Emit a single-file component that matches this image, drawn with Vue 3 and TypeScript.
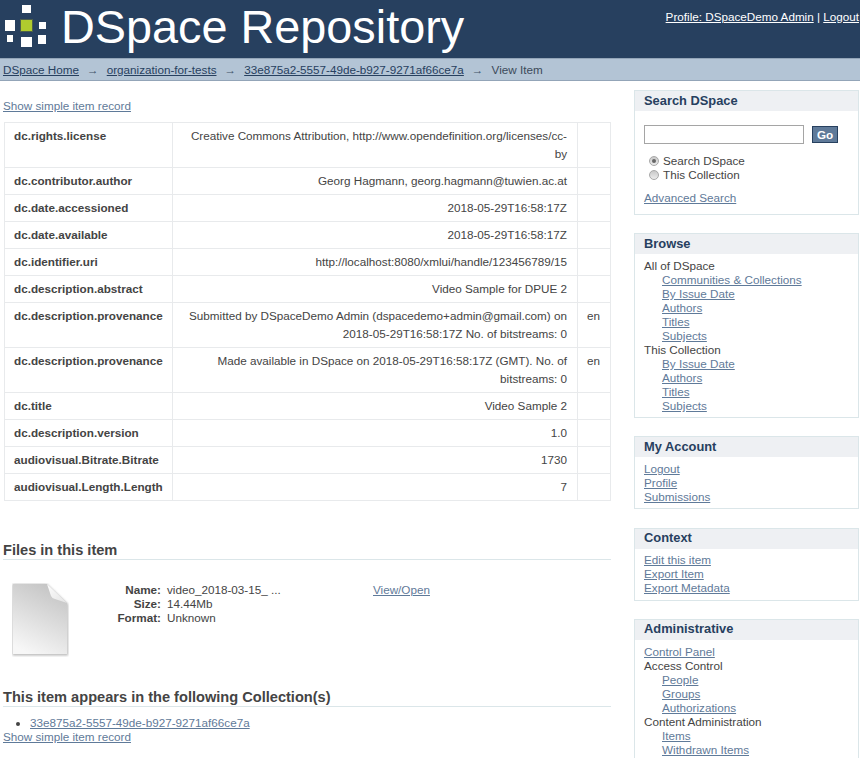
<template>
  <div class="page">
    <header class="top">
      <div class="brand">
        <svg class="logo" width="50" height="50" viewBox="0 0 50 50" aria-hidden="true">
          <rect x="22" y="5" width="9" height="8" fill="#fff" />
          <rect x="5" y="20" width="10" height="11" fill="#fff" />
          <rect x="20" y="19" width="13" height="13" fill="#4d5f4a" />
          <rect x="21" y="20" width="11" height="11" fill="#b0cb2e" />
          <rect x="39" y="22" width="7" height="7" fill="#fff" />
          <rect x="7" y="35" width="6" height="7" fill="#fff" />
          <rect x="21" y="37" width="11" height="10" fill="#fff" />
          <rect x="38" y="35" width="8" height="9" fill="#fff" />
        </svg>
        <h1>DSpace Repository</h1>
      </div>
      <div class="user">
        <a href="#">Profile: DSpaceDemo Admin</a> | <a href="#">Logout</a>
      </div>
    </header>

    <nav class="trail">
      <template v-for="crumb in crumbs" :key="crumb">
        <a href="#">{{ crumb }}</a>
        <span class="arrow">→</span>
      </template>
      <span class="current">View Item</span>
    </nav>

    <div class="columns">
      <main class="body">
        <p class="toggle"><a href="#">Show simple item record</a></p>
        <table class="meta">
          <tbody>
            <tr v-for="(row, i) in metadata" :key="i">
              <th>{{ row.field }}</th>
              <td class="value">{{ row.value }}</td>
              <td class="lang">{{ row.lang }}</td>
            </tr>
          </tbody>
        </table>

        <h2 class="files-title">Files in this item</h2>
        <div class="file">
          <svg class="file-icon" width="57" height="74" viewBox="0 0 57 74" aria-hidden="true">
            <defs>
              <linearGradient id="sheet" x1="0.7" y1="0" x2="0.3" y2="1">
                <stop offset="0" stop-color="#c4c4c4" />
                <stop offset="1" stop-color="#f7f7f7" />
              </linearGradient>
              <linearGradient id="fold" x1="0" y1="0" x2="1" y2="1">
                <stop offset="0" stop-color="#fdfdfd" />
                <stop offset="1" stop-color="#e4e4e4" />
              </linearGradient>
              <filter id="soft" x="-10%" y="-10%" width="120%" height="120%">
                <feGaussianBlur stdDeviation="0.8" />
              </filter>
            </defs>
            <path d="M0.5 1H35L56 21V72.5H0.5Z" fill="#8c8c8c" opacity="0.6" filter="url(#soft)" />
            <path d="M1 1H35L55 20V71H1Z" fill="url(#sheet)" />
            <path d="M35 1L55 20L43 16Q40 15.5 39 13Z" fill="url(#fold)" />
          </svg>
          <dl class="file-info">
            <div><dt>Name:</dt><dd>video_2018-03-15_ ...</dd></div>
            <div><dt>Size:</dt><dd>14.44Mb</dd></div>
            <div><dt>Format:</dt><dd>Unknown</dd></div>
          </dl>
          <a class="view" href="#">View/Open</a>
        </div>

        <h2 class="coll-title">This item appears in the following Collection(s)</h2>
        <ul class="coll-list">
          <li><a href="#">33e875a2-5557-49de-b927-9271af66ce7a</a></li>
        </ul>
        <p class="toggle-end"><a href="#">Show simple item record</a></p>
      </main>

      <aside class="side">
        <section class="box">
          <h3>Search DSpace</h3>
          <div class="search">
            <div class="search-row">
              <input type="text" class="q" />
              <button type="button" class="go">Go</button>
            </div>
            <label class="radio"><input type="radio" name="scope" checked />Search DSpace</label>
            <label class="radio"><input type="radio" name="scope" />This Collection</label>
            <a class="adv" href="#">Advanced Search</a>
          </div>
        </section>

        <section v-for="box in boxes" :key="box.title" class="box">
          <h3>{{ box.title }}</h3>
          <div class="links">
            <template v-for="line in box.lines" :key="line.label">
              <div v-if="line.kind === 'head'">{{ line.label }}</div>
              <div v-else :class="{ sub: line.kind === 'sub' }"><a href="#">{{ line.label }}</a></div>
            </template>
          </div>
        </section>
      </aside>
    </div>
  </div>
</template>

<script setup lang="ts">
interface MetaRow {
  field: string;
  value: string;
  lang?: string;
}

interface BoxLine {
  label: string;
  kind: 'head' | 'link' | 'sub';
}

const crumbs = ['DSpace Home', 'organization-for-tests', '33e875a2-5557-49de-b927-9271af66ce7a'];

const metadata: MetaRow[] = [
  { field: 'dc.rights.license', value: 'Creative Commons Attribution, http://www.opendefinition.org/licenses/cc-by' },
  { field: 'dc.contributor.author', value: 'Georg Hagmann, georg.hagmann@tuwien.ac.at' },
  { field: 'dc.date.accessioned', value: '2018-05-29T16:58:17Z' },
  { field: 'dc.date.available', value: '2018-05-29T16:58:17Z' },
  { field: 'dc.identifier.uri', value: 'http://localhost:8080/xmlui/handle/123456789/15' },
  { field: 'dc.description.abstract', value: 'Video Sample for DPUE 2' },
  {
    field: 'dc.description.provenance',
    value: 'Submitted by DSpaceDemo Admin (dspacedemo+admin@gmail.com) on 2018-05-29T16:58:17Z No. of bitstreams: 0',
    lang: 'en'
  },
  {
    field: 'dc.description.provenance',
    value: 'Made available in DSpace on 2018-05-29T16:58:17Z (GMT). No. of bitstreams: 0',
    lang: 'en'
  },
  { field: 'dc.title', value: 'Video Sample 2' },
  { field: 'dc.description.version', value: '1.0' },
  { field: 'audiovisual.Bitrate.Bitrate', value: '1730' },
  { field: 'audiovisual.Length.Length', value: '7' }
];

const sub = (label: string): BoxLine => ({ label, kind: 'sub' });
const link = (label: string): BoxLine => ({ label, kind: 'link' });
const head = (label: string): BoxLine => ({ label, kind: 'head' });

const boxes: { title: string; lines: BoxLine[] }[] = [
  {
    title: 'Browse',
    lines: [
      head('All of DSpace'),
      sub('Communities & Collections'),
      sub('By Issue Date'),
      sub('Authors'),
      sub('Titles'),
      sub('Subjects'),
      head('This Collection'),
      sub('By Issue Date '),
      sub('Authors '),
      sub('Titles '),
      sub('Subjects ')
    ]
  },
  { title: 'My Account', lines: [link('Logout'), link('Profile'), link('Submissions')] },
  { title: 'Context', lines: [link('Edit this item'), link('Export Item'), link('Export Metadata')] },
  {
    title: 'Administrative',
    lines: [
      link('Control Panel'),
      head('Access Control'),
      sub('People'),
      sub('Groups'),
      sub('Authorizations'),
      head('Content Administration'),
      sub('Items'),
      sub('Withdrawn Items')
    ]
  }
];
</script>

<style>
html,
body {
  margin: 0;
  overflow: hidden;
  background: #fff;
}
</style>

<style scoped>
.page {
  height: 758px;
  overflow: hidden;
  font-family: "Liberation Sans", Arial, sans-serif;
  font-size: 11.7px;
  line-height: 14px;
  color: #444;
}

a {
  color: #5f7a99;
}

.top {
  display: flex;
  justify-content: space-between;
  height: 58px;
  background: #27405f;
  color: #fff;
}

.brand {
  display: flex;
}

.logo {
  flex: none;
  margin-right: 11px;
}

h1 {
  margin: 0;
  font-size: 46.8px;
  font-weight: 400;
  line-height: 54px;
  color: #fff;
}

.user {
  padding: 10px 1px 0 0;
}

.user a {
  color: #fff;
}

.trail {
  display: flex;
  align-items: center;
  height: 21px;
  padding-left: 3px;
  background: #b3c4d5;
  border-top: 1px solid #93a5b8;
  border-bottom: 1px solid #93a5b8;
  color: #27405f;
}

.trail a {
  color: #27405f;
}

.arrow {
  margin: 0 8px;
  color: #3c4f66;
}

.current {
  color: #3c4a5a;
}

.columns {
  display: flex;
  align-items: flex-start;
}

.body {
  flex: none;
  width: 608px;
  margin-left: 3px;
}

.toggle {
  margin: 18px 0 9px;
}

.meta {
  width: 607px;
  margin-left: 1px;
  border-collapse: collapse;
  table-layout: fixed;
  line-height: 18px;
}

.meta th,
.meta td {
  padding: 4px 9px;
  border: 1px solid #e8eaec;
  vertical-align: top;
}

.meta th {
  width: 149px;
  text-align: left;
  font-weight: 700;
  color: #444;
}

.meta .value {
  padding-right: 10px;
  text-align: right;
}

.meta .lang {
  width: 14px;
}

h2 {
  margin: 0;
  font-size: 14.6px;
  line-height: 18px;
  font-weight: 700;
  color: #444;
  border-bottom: 1px solid #dbe6e9;
}

.files-title {
  margin-top: 40px;
}

.file {
  display: flex;
  align-items: flex-start;
  height: 128px;
  padding-top: 23px;
  box-sizing: border-box;
}

.file-icon {
  flex: none;
  margin-left: 9px;
}

.file-info {
  flex: none;
  width: 304px;
  margin: 0;
}

.file-info div {
  display: flex;
}

.file-info dt {
  width: 92px;
  text-align: right;
  font-weight: 700;
}

.file-info dd {
  margin: 0 0 0 6px;
}

.coll-list {
  margin: 9px 0 0;
  padding-left: 27px;
}

.toggle-end {
  margin: 0;
}

.side {
  flex: none;
  width: 225px;
  margin: 9px 0 0 23px;
}

.box {
  margin-bottom: 18px;
  border: 1px solid #dbe6e9;
}

.box:nth-child(3) {
  margin-bottom: 19px;
}

.box h3 {
  margin: 0;
  padding: 2px 9px 3px;
  font-size: 12.87px;
  line-height: 15px;
  font-weight: 700;
  background: #eef0f3;
  color: #27405f;
}

.box:nth-child(n + 4) h3 {
  padding: 1px 9px 4px;
}

.search {
  display: flex;
  flex-direction: column;
  padding: 14px 9px 9px;
}

.search-row {
  display: flex;
  align-items: center;
  margin-bottom: 10px;
}

.q {
  width: 160px;
  height: 19px;
  box-sizing: border-box;
  margin: 0;
  padding: 0;
  border: 1px solid #a5a5a5;
  background: #fff;
}

.go {
  width: 26px;
  height: 17px;
  margin-left: 8px;
  padding: 0;
  border: 1px solid #27405f;
  border-radius: 0;
  background: #5f7a99;
  color: #fff;
  font: 700 11.7px "Liberation Sans", Arial, sans-serif;
}

.radio {
  display: flex;
  align-items: center;
  padding-left: 4px;
}

.radio input {
  appearance: none;
  display: grid;
  place-items: center;
  box-sizing: border-box;
  width: 10px;
  height: 10px;
  margin: 0 4px 0 1px;
  border: 1px solid #a8a8a8;
  border-radius: 50%;
  background: linear-gradient(#c8c8c8, #ececec);
}

.radio input:checked::before {
  content: "";
  width: 4px;
  height: 4px;
  border-radius: 50%;
  background: #666;
}

.adv {
  align-self: flex-start;
  margin-top: 9px;
}

.links {
  padding: 5px 9px 4px;
}

.links .sub {
  padding-left: 18px;
}

.box:nth-child(4) .links {
  padding: 4px 9px 5px;
}

.box:last-child {
  margin-bottom: 0;
}

.box:last-child .links {
  padding-top: 5px;
  padding-bottom: 40px;
}
</style>
